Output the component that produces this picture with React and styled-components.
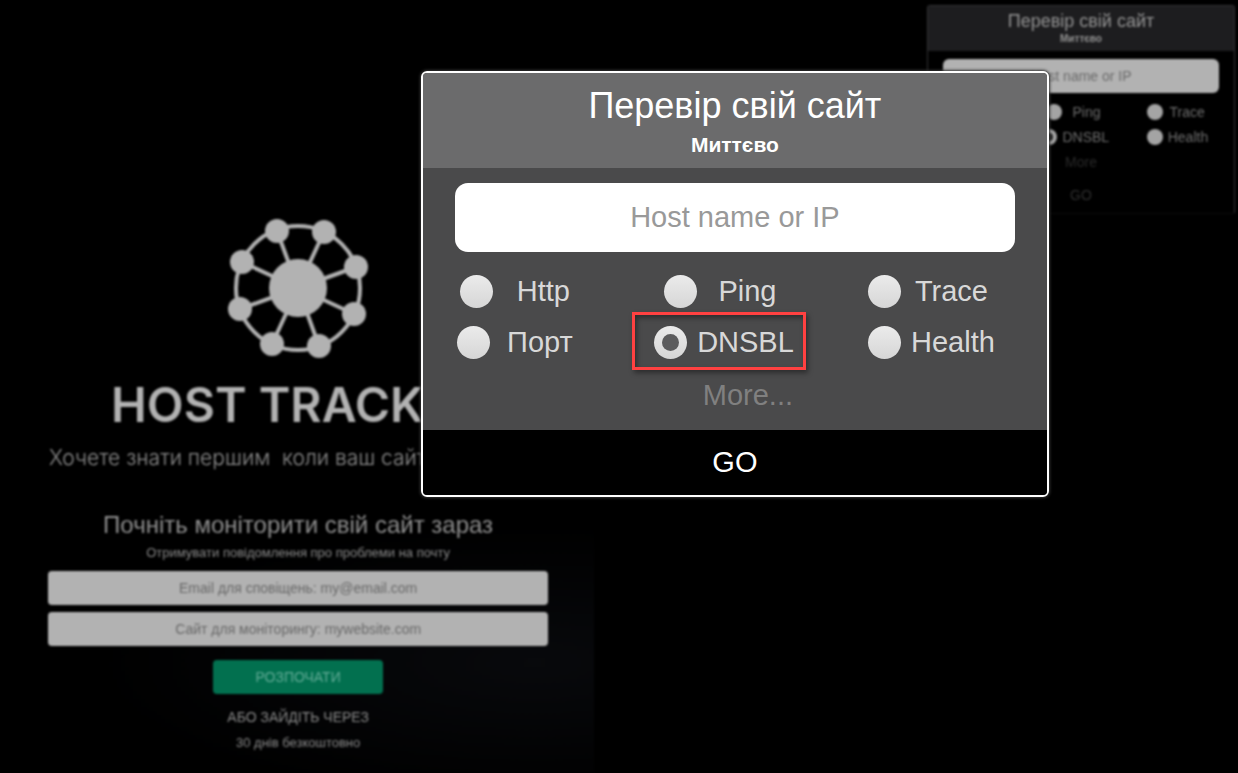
import React, { useState } from "react";
import styled, { createGlobalStyle, css, ThemeProvider } from "styled-components";

const GlobalStyle = createGlobalStyle`
    * {
        box-sizing: border-box;
    }
    body {
        margin: 0;
        background: #000;
        font-family: "Liberation Sans", Arial, sans-serif;
    }
    input, button {
        font-family: inherit;
    }
`;

const large = {
    border: "#fff",
    borderWidth: 2,
    radius: 6,
    headBg: "#6b6b6c",
    headPad: "12px 0 6px",
    bodyBg: "#4a4a4b",
    bodyPad: "15px 32px 8px",
    titleColor: "#fff",
    titleSize: 36,
    titleLine: 42,
    subSize: 21,
    subLine: 35,
    inputBg: "#fff",
    inputColor: "#999",
    inputHeight: 69,
    inputRadius: 13,
    inputGap: 14,
    text: 29,
    row: 51,
    rowMargin: "0 -17px 0 -35px",
    radio: 33,
    dot: 17,
    radioBg: "linear-gradient(#ebebeb, #d6d6d6)",
    dotColor: "#5c5c5d",
    gap: 10,
    label: 80,
    labelColor: "#d8d8d8",
    moreColor: "#808080",
    moreShift: 26,
    moreLine: 54,
    goColor: "#fff",
    goHeight: 65
};

const small = {
    border: "#333335 #333335 #0c0c0d",
    borderWidth: 1,
    radius: 3,
    headBg: "#1d1d1f",
    headPad: "4px 0 5px",
    bodyBg: "#000",
    bodyPad: "8px 15px 2px",
    titleColor: "#949494",
    titleSize: 18,
    titleLine: 22,
    subSize: 10,
    subLine: 14,
    inputBg: "#b2b2b2",
    inputColor: "#6a6a6a",
    inputHeight: 34,
    inputRadius: 6,
    inputGap: 6,
    text: 14,
    row: 25,
    rowMargin: "0 -8px 0 -18px",
    radio: 16,
    dot: 8,
    radioBg: "#a4a4a4",
    dotColor: "#222",
    gap: 5,
    label: 39,
    labelColor: "#6e6e6e",
    moreColor: "#2a2a2a",
    moreShift: 0,
    moreLine: 26,
    goColor: "#303030",
    goHeight: 36
};

const Page = styled.div`
    position: relative;
    min-height: 100vh;
    background: #000;
`;

const Backdrop = styled.div`
    display: flex;
    justify-content: space-between;
    align-items: flex-start;
    filter: blur(1px);
`;

const Hero = styled.main`
    width: 48%;
    padding: 218px 0 0 2px;
    display: flex;
    flex-direction: column;
    align-items: center;
`;

const Brand = styled.h1`
    align-self: flex-start;
    margin: 23px 0 17px 109px;
    color: #b2b2b2;
    font-family: Inter, sans-serif;
    font-size: 48px;
    font-weight: 600;
    line-height: 48px;
    white-space: nowrap;
`;

const Tagline = styled.p`
    align-self: flex-start;
    margin: 0 0 27px 47px;
    color: #909090;
    font-family: Inter, sans-serif;
    font-size: 21px;
    font-weight: 300;
    line-height: 24px;
    white-space: pre;
`;

const SignUp = styled.form`
    width: 100%;
    padding: 14px 46px 20px;
    display: flex;
    flex-direction: column;
    align-items: center;
    background: radial-gradient(ellipse at 90% 60%, #08090c, transparent 60%);
`;

const SignUpTitle = styled.h2`
    margin: 0 0 4px;
    color: #8f8f8f;
    font-size: 24px;
    font-weight: 400;
    line-height: 28px;
`;

const Note = styled.p`
    margin: ${(p) => p.$margin};
    color: #8a8a8a;
    font-size: ${(p) => p.$size}px;
    line-height: 20px;
`;

const Field = styled.input`
    width: 100%;
    height: 34px;
    margin-bottom: 7px;
    border: none;
    border-radius: 4px;
    background: #b2b2b2;
    font-size: 14px;
    text-align: center;
    &::placeholder {
        color: #686868;
        opacity: 1;
    }
`;

const StartButton = styled.button`
    width: 170px;
    height: 34px;
    margin: 7px 0 13px;
    border: none;
    border-radius: 4px;
    background: #02704f;
    color: #63ab96;
    font-size: 14px;
`;

const Corner = styled.aside`
    width: 308px;
    margin: 5px 3px 0 0;
`;

const Popup = styled.div`
    position: absolute;
    top: 71px;
    left: 34%;
    width: 628px;
    box-shadow: 0 0 3px 1px #333;
    border-radius: 6px;
`;

const Card = styled.form`
    overflow: hidden;
    border-style: solid;
    border-width: ${(p) => p.theme.borderWidth}px;
    border-color: ${(p) => p.theme.border};
    border-radius: ${(p) => p.theme.radius}px;
    background: ${(p) => p.theme.bodyBg};
`;

const CardHead = styled.header`
    padding: ${(p) => p.theme.headPad};
    background: ${(p) => p.theme.headBg};
    color: ${(p) => p.theme.titleColor};
    text-align: center;
`;

const CardTitle = styled.h2`
    margin: 0;
    font-size: ${(p) => p.theme.titleSize}px;
    font-weight: 400;
    line-height: ${(p) => p.theme.titleLine}px;
`;

const CardSub = styled.p`
    margin: 0;
    font-size: ${(p) => p.theme.subSize}px;
    font-weight: 700;
    line-height: ${(p) => p.theme.subLine}px;
`;

const CardBody = styled.div`
    padding: ${(p) => p.theme.bodyPad};
`;

const HostInput = styled.input`
    display: block;
    width: 100%;
    height: ${(p) => p.theme.inputHeight}px;
    margin-bottom: ${(p) => p.theme.inputGap}px;
    border: none;
    border-radius: ${(p) => p.theme.inputRadius}px;
    background: ${(p) => p.theme.inputBg};
    font-size: ${(p) => p.theme.text}px;
    text-align: center;
    &::placeholder {
        color: ${(p) => p.theme.inputColor};
        opacity: 1;
    }
`;

const Row = styled.div`
    height: ${(p) => p.theme.row}px;
    margin: ${(p) => p.theme.rowMargin};
    display: flex;
    justify-content: space-around;
    align-items: center;
`;

const Option = styled.label`
    position: relative;
    display: flex;
    align-items: center;
    gap: ${(p) => p.theme.gap}px;
    color: ${(p) => p.theme.labelColor};
    font-size: ${(p) => p.theme.text}px;
    span {
        min-width: ${(p) => p.theme.label}px;
        text-align: center;
    }
    ${(p) => p.$marked && css`
        &::after {
            content: "";
            position: absolute;
            inset: -14px -12px -11px -22px;
            border: 3px solid #ff4141;
            box-shadow: 2px 3px 5px rgba(0, 0, 0, 0.4), inset 2px 3px 5px rgba(0, 0, 0, 0.4);
            pointer-events: none;
        }
    `}
`;

const Radio = styled.input`
    appearance: none;
    width: ${(p) => p.theme.radio}px;
    height: ${(p) => p.theme.radio}px;
    margin: 0;
    display: grid;
    place-items: center;
    border-radius: 50%;
    background: ${(p) => p.theme.radioBg};
    &:checked::before {
        content: "";
        width: ${(p) => p.theme.dot}px;
        height: ${(p) => p.theme.dot}px;
        border-radius: 50%;
        background: ${(p) => p.theme.dotColor};
    }
`;

const More = styled.a`
    display: block;
    padding-left: ${(p) => p.theme.moreShift}px;
    color: ${(p) => p.theme.moreColor};
    font-size: ${(p) => p.theme.text}px;
    line-height: ${(p) => p.theme.moreLine}px;
    text-align: center;
    text-decoration: none;
`;

const GoButton = styled.button`
    display: block;
    width: 100%;
    height: ${(p) => p.theme.goHeight}px;
    padding: 0;
    border: none;
    background: #000;
    color: ${(p) => p.theme.goColor};
    font-size: ${(p) => p.theme.text}px;
`;

const rows = [
    ["Http", "Ping", "Trace"],
    ["Порт", "DNSBL", "Health"]
];

const nodes = [
    [49, 13], [96, 14], [128, 49], [126, 96],
    [91, 128], [44, 126], [12, 91], [14, 44]
];

const Logo = () => (
    <svg width="140" height="140" viewBox="0 0 140 140" fill="#b2b2b2" stroke="#b2b2b2" aria-hidden="true">
        <circle cx="70" cy="70" r="62" fill="none" strokeWidth="4" />
        {nodes.map(([x, y]) => (
            <g key={`${x}-${y}`}>
                <line x1="70" y1="70" x2={x} y2={y} strokeWidth="4" />
                <circle cx={x} cy={y} r="12" stroke="none" />
            </g>
        ))}
        <circle cx="70" cy="70" r="29" stroke="none" />
    </svg>
);

const CheckCard = ({ theme, name, more, marked }) => {
    const [type, setType] = useState("DNSBL");

    return <ThemeProvider theme={theme}>
        <Card onSubmit={(e) => e.preventDefault()}>
            <CardHead>
                <CardTitle>Перевір свій сайт</CardTitle>
                <CardSub>Миттєво</CardSub>
            </CardHead>
            <CardBody>
                <HostInput type="text" placeholder="Host name or IP" aria-label="Host name or IP" />
                {rows.map((row) => (
                    <Row key={row[0]}>
                        {row.map((item) => (
                            <Option key={item} $marked={item === marked}>
                                <Radio
                                    type="radio"
                                    name={name}
                                    checked={item === type}
                                    onChange={() => setType(item)}
                                />
                                <span>{item}</span>
                            </Option>
                        ))}
                    </Row>
                ))}
                <More href="#more">{more}</More>
            </CardBody>
            <GoButton>GO</GoButton>
        </Card>
    </ThemeProvider>
};

export default function App() {
    return <Page>
        <GlobalStyle />
        <Backdrop>
            <Hero>
                <Logo />
                <Brand>HOST TRACK</Brand>
                <Tagline>Хочете знати першим  коли ваш сайт</Tagline>
                <SignUp onSubmit={(e) => e.preventDefault()}>
                    <SignUpTitle>Почніть моніторити свій сайт зараз</SignUpTitle>
                    <Note $size={13} $margin="0 0 8px">Отримувати повідомлення про проблеми на почту</Note>
                    <Field
                        type="email"
                        placeholder="Email для сповіщень: my@email.com"
                        aria-label="Email для сповіщень"
                    />
                    <Field
                        type="text"
                        placeholder="Сайт для моніторингу: mywebsite.com"
                        aria-label="Сайт для моніторингу"
                    />
                    <StartButton>РОЗПОЧАТИ</StartButton>
                    <Note $size={14} $margin="0 0 6px">АБО ЗАЙДІТЬ ЧЕРЕЗ</Note>
                    <Note $size={13} $margin="0">30 днів безкоштовно</Note>
                </SignUp>
            </Hero>
            <Corner>
                <CheckCard theme={small} name="corner-type" more="More" />
            </Corner>
        </Backdrop>
        <Popup>
            <CheckCard theme={large} name="popup-type" more="More..." marked="DNSBL" />
        </Popup>
    </Page>
}
